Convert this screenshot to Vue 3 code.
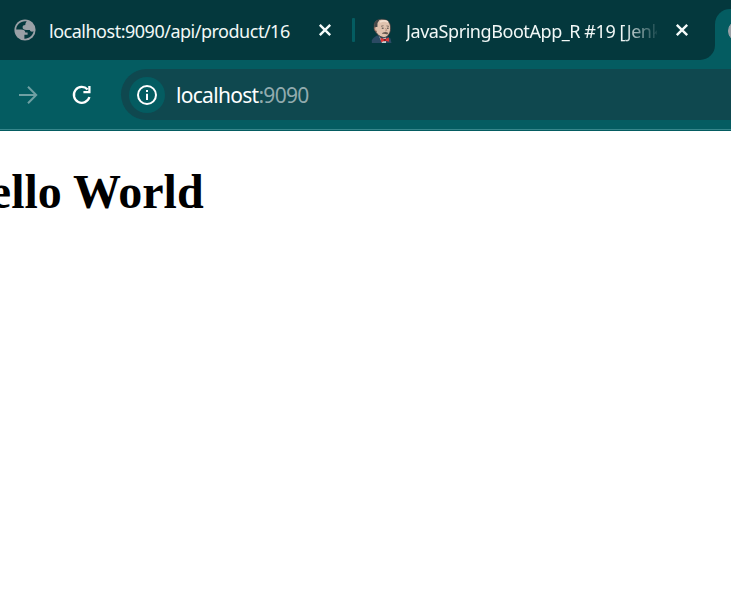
<script setup>
const tabs = [
  { id: 'api', icon: 'globe', title: 'localhost:9090/api/product/16' },
  { id: 'jenkins', icon: 'jenkins', title: 'JavaSpringBootApp_R #19 [Jenk' },
]
const address = { host: 'localhost', port: ':9090' }
</script>

<template>
  <div class="browser">
    <div class="tab-strip">
      <div v-for="tab in tabs" :key="tab.id" class="tab" :class="tab.id">
        <svg v-if="tab.icon === 'globe'" class="favicon" viewBox="0 0 24 24">
          <circle cx="12" cy="12" r="10.6" fill="#9aa0a6" />
          <path d="M13.8 3.3C8 2.4 3.4 6.6 3.2 11.4H8.3C10.7 11.4 12.3 12.4 12.3 14.4H14.6V16.8H11.4V20.7C15.8 20.9 19.8 17.8 20.6 13.3C18.6 14.2 17.3 13.4 16.8 12H13.3C11 12 9.6 11 9.6 9.2C9.6 7.7 10.6 7 12.3 7C12.3 5.4 12.8 4.3 13.8 3.3Z" fill="#04383d" />
        </svg>
        <svg v-else class="favicon butler" viewBox="0 0 22 25">
          <path d="M.8 25V22.5Q1.5 20 6 17.5H15L19.5 20.5L20.5 25Z" fill="#2b4a63" />
          <path d="M7.5 17L10.5 21.5L15 19V25H11Z" fill="#c6d0d1" />
          <path d="M3 8C3 3 7 1 12 1.2C17 1.4 20 5 19.6 11C19.3 16 16 19.8 12.7 19.5C8 19 3 14 3 8Z" fill="#dfc2ae" stroke="#353637" stroke-width=".8" />
          <path d="M4 11C1.8 6 4 2 9 1L6.5 5L6.4 9L4.5 9Z" fill="#454747" />
          <path d="M4.5 9Q2.8 8.5 3.2 11Q3.8 14 6 13.5" fill="#cfab97" stroke="#6c5146" stroke-width=".7" />
          <path d="M9 4Q13 1.8 17 4" fill="none" stroke="#f3dfd0" stroke-width="1.8" />
          <path d="M10 8.3L12.5 7.7M15.5 7.9L18 8.4" stroke="#6c5a50" stroke-width=".8" />
          <path d="M10.8 10.2H12.6M16 10.2H17.6" stroke="#403b39" stroke-width="1" />
          <path d="M14.5 10L15.8 12.6L14 13" fill="none" stroke="#a6806e" stroke-width=".7" />
          <path d="M11.3 14.9Q14.5 13.2 17.4 15L16.2 16.4Q13.5 15.4 11.3 15.9Z" fill="#655850" />
          <path d="M9.5 19.8L13.5 21.3L17.8 19.6L18.2 23.8L13.8 22.7L10 24.3Z" fill="#dd3836" />
          <circle cx="13.8" cy="22" r="1.2" fill="#841b27" />
        </svg>
        <span class="title">{{ tab.title }}</span>
        <svg class="close" viewBox="0 0 14 14"><path d="M1.8 1.8L12.2 12.2M12.2 1.8L1.8 12.2" /></svg>
      </div>
      <div class="active-tab"><span class="active-favicon"></span></div>
    </div>
    <div class="toolbar">
      <svg class="forward" viewBox="0 0 20 20"><path d="M1 10H18M10 1.8L18.2 10L10 18.2" /></svg>
      <svg class="reload" viewBox="0 0 20 20">
        <path d="M15.6 4.5A7.9 7.9 0 1 0 17.4 12" />
        <path d="M17.4 1V7.2H11.4" />
      </svg>
      <div class="address-bar">
        <span class="site-info">
          <svg viewBox="0 0 20 20">
            <circle cx="10" cy="10" r="9" />
            <path d="M10 8.8V15M10 5V7" />
          </svg>
        </span>
        <span class="url">{{ address.host }}<span class="port">{{ address.port }}</span></span>
      </div>
    </div>
    <main class="page"><h1>Hello World</h1></main>
  </div>
</template>

<style>
body { margin: 0; background: #fff; }
</style>

<style scoped>
.browser {
  width: 731px;
  height: 592px;
  overflow: hidden;
  font-family: "Noto Sans", "Open Sans", sans-serif;
}
.tab-strip {
  display: flex;
  height: 60px;
  background: linear-gradient(to bottom, #04383d 40px, #045c61 40px);
}
.tab {
  display: flex;
  flex: none;
  align-items: center;
  box-sizing: border-box;
  height: 60px;
  background: #04383d;
}
.tab.api { width: 355px; padding-left: 13px; }
.tab.api::after {
  content: "";
  width: 3px;
  height: 24px;
  margin-left: auto;
  background: #045c61;
  border-radius: 1px;
}
.tab.jenkins { width: 360px; padding-left: 16px; border-bottom-right-radius: 15px; }
.favicon { flex: none; width: 24px; height: 24px; }
.butler { width: 22px; height: 25px; }
.title {
  flex: none;
  width: 251px;
  margin-left: 12px;
  color: #f2f8f7;
  font-size: 18px;
  line-height: 28px;
  letter-spacing: -0.49px;
  white-space: nowrap;
  padding-top: 2px;
}
.jenkins .title {
  margin-left: 13px;
  letter-spacing: -0.43px;
  -webkit-mask-image: linear-gradient(to right, #000 216px, transparent 254px);
  mask-image: linear-gradient(to right, #000 216px, transparent 254px);
}
.close {
  flex: none;
  width: 14px;
  height: 14px;
  margin-left: 18px;
  fill: none;
  stroke: #f5fbfa;
  stroke-width: 2.4;
}
.active-tab {
  flex: none;
  box-sizing: border-box;
  width: 240px;
  height: 51px;
  margin-top: 9px;
  padding: 11px 0 0 13px;
  background: #045c61;
  border-top-left-radius: 15px;
}
.active-favicon {
  display: block;
  width: 20px;
  height: 20px;
  border: 1px solid #9aa0a6;
  border-radius: 50%;
  background: #9aa0a6;
}
.toolbar {
  display: flex;
  align-items: center;
  box-sizing: border-box;
  height: 71px;
  padding: 0 0 2px 18px;
  background: linear-gradient(to bottom, #045c61 69px, #36868b 69px, #36868b 70px, #045c61 70px);
}
.forward, .reload { flex: none; width: 20px; height: 20px; fill: none; }
.forward { stroke: #6fa0a3; stroke-width: 2; }
.reload { margin-left: 34px; stroke: #fff; stroke-width: 2.3; }
.address-bar {
  display: flex;
  align-items: center;
  flex: none;
  box-sizing: border-box;
  width: 660px;
  height: 51px;
  margin-left: 29px;
  padding-left: 8px;
  background: #0f484f;
  border-radius: 26px;
}
.site-info {
  display: flex;
  align-items: center;
  justify-content: center;
  width: 36px;
  height: 36px;
  border-radius: 50%;
  background: #045c61;
}
.site-info svg { width: 20px; height: 20px; fill: none; stroke: #fff; stroke-width: 2; }
.url {
  margin-left: 11px;
  color: #fff;
  font-size: 21px;
  line-height: 30px;
  letter-spacing: -0.7px;
}
.port { color: #92abae; }
.page { padding-top: 33px; }
h1 {
  margin: 0 0 0 -47.5px;
  font: bold 48px/56px "Liberation Serif", serif;
  color: #000;
  white-space: nowrap;
}
</style>
